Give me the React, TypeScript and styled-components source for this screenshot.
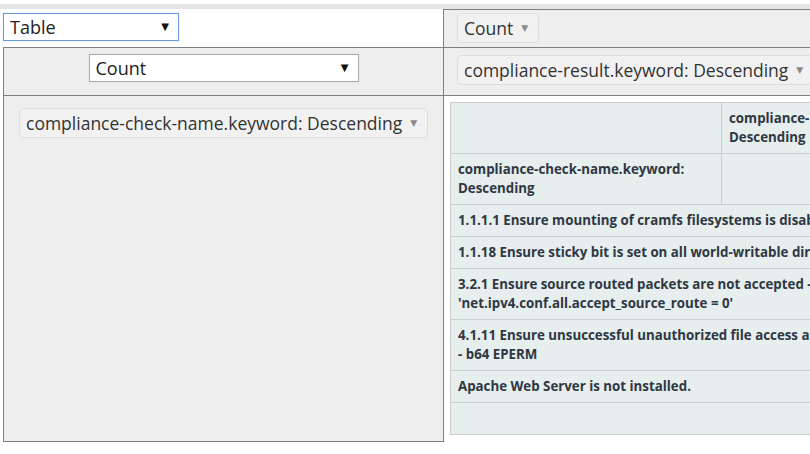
import React from "react";
import styled, { createGlobalStyle } from "styled-components";

const Global = createGlobalStyle`
  html, body { margin: 0; padding: 0; background: #ffffff; overflow: hidden; }
  body { font-family: "Open Sans", "Noto Sans", sans-serif; color: #333; }
`;

const Band = styled.div`
  margin-top: 4px;
  height: 5px;
  background: #e5e5e5;
`;

const Layout = styled.div`
  display: grid;
  grid-template-columns: 440px 1fr;
  grid-template-rows: 38px 49px 346px;
  margin-left: 3px;
`;

const LINE = "#7f7f7f";

const RendererCell = styled.div`
  padding-top: 4px;
  background: #fff;
`;

const AreaCell = styled.div<{ $top?: boolean; $bottom?: boolean; $left?: boolean; $pad: string; $bg?: string }>`
  box-sizing: border-box;
  background: ${(p) => p.$bg ?? "#eeeeee"};
  border-top: ${(p) => (p.$top ? `1px solid ${LINE}` : "none")};
  border-bottom: ${(p) => (p.$bottom ? `1px solid ${LINE}` : "none")};
  border-left: ${(p) => (p.$left ? `1px solid ${LINE}` : "none")};
  padding: ${(p) => p.$pad};
  overflow: hidden;
  min-width: 0;
`;

const AggCell = styled(AreaCell)`
  display: flex;
  justify-content: center;
  align-items: flex-start;
`;

const Select = styled.div<{ $w: number; $focus?: boolean }>`
  box-sizing: border-box;
  width: ${(p) => p.$w}px;
  height: 28px;
  display: flex;
  align-items: center;
  justify-content: space-between;
  background: #fff;
  border: 1px solid ${(p) => (p.$focus ? "#6d9be0" : "#a9a9a9")};
  box-shadow: ${(p) => (p.$focus ? "0 0 1px 0 #a8c6f0" : "none")};
  padding: 0 9px 0 6px;
  font-size: 18px;
  color: #222;
  line-height: 1;
`;

const SelectCaret = styled.span`
  font-size: 10px;
  color: #111;
  font-family: "DejaVu Sans", sans-serif;
`;

const Pill = styled.div`
  box-sizing: border-box;
  display: inline-flex;
  align-items: center;
  gap: 8px;
  height: 30px;
  padding: 0 10px 0 6px;
  background: #f1f1f1;
  border: 1px solid #dedede;
  border-radius: 5px;
  font-size: 17.5px;
  color: #333;
  white-space: nowrap;
`;

const PillCaret = styled.span`
  font-size: 9px;
  color: #8a8a8a;
  font-family: "DejaVu Sans", sans-serif;
`;

const Output = styled.div`
  box-sizing: border-box;
  border-left: 1px solid ${LINE};
  padding: 6px 0 0 6px;
  overflow: hidden;
  min-width: 0;
`;

const PvtTable = styled.div`
  width: 640px;
  display: grid;
  grid-template-columns: 271px 1fr;
  background: #e6eeee;
  border-top: 1px solid #cdcdcd;
  border-left: 1px solid #cdcdcd;
  font-size: 13.3px;
  font-weight: 700;
  line-height: 19px;
  color: #2f3743;
`;

const Th = styled.div<{ $span?: boolean }>`
  box-sizing: border-box;
  grid-column: ${(p) => (p.$span ? "1 / -1" : "auto")};
  padding: 6px 7px;
  min-height: 32px;
  border-right: 1px solid #cdcdcd;
  border-bottom: 1px solid #cdcdcd;
  white-space: nowrap;
`;

const Pill2 = ({ children }: { children: React.ReactNode }) => (
  <Pill>
    <span>{children}</span>
    <PillCaret>▼</PillCaret>
  </Pill>
);

const rows: string[][] = [
  ["1.1.1.1 Ensure mounting of cramfs filesystems is disabled"],
  ["1.1.18 Ensure sticky bit is set on all world-writable directories"],
  ["3.2.1 Ensure source routed packets are not accepted -", "'net.ipv4.conf.all.accept_source_route = 0'"],
  ["4.1.11 Ensure unsuccessful unauthorized file access attempts are collected", "- b64 EPERM"],
  ["Apache Web Server is not installed."],
  [],
];

export default function App() {
  return (
    <>
      <Global />
      <Band />
      <Layout>
        <RendererCell>
          <Select $w={176} $focus>
            <span>Table</span>
            <SelectCaret>▼</SelectCaret>
          </Select>
        </RendererCell>
        <AreaCell $top $left $pad="3px 13px">
          <Pill2>Count</Pill2>
        </AreaCell>
        <AggCell $top $bottom $left $pad="6px 0 0 0">
          <Select $w={270}>
            <span>Count</span>
            <SelectCaret>▼</SelectCaret>
          </Select>
        </AggCell>
        <AreaCell $top $bottom $left $pad="7px 13px">
          <Pill2>compliance-result.keyword: Descending</Pill2>
        </AreaCell>
        <AreaCell $bottom $left $pad="12px 15px">
          <Pill2>compliance-check-name.keyword: Descending</Pill2>
        </AreaCell>
        <Output>
          <PvtTable>
            <Th />
            <Th>
              compliance-result.keyword:
              <br />
              Descending
            </Th>
            <Th>
              compliance-check-name.keyword:
              <br />
              Descending
            </Th>
            <Th />
            {rows.map((r, i) => (
              <Th $span key={i}>
                {r.map((line, j) => (
                  <React.Fragment key={j}>
                    {j > 0 && <br />}
                    {line}
                  </React.Fragment>
                ))}
              </Th>
            ))}
          </PvtTable>
        </Output>
      </Layout>
    </>
  );
}
